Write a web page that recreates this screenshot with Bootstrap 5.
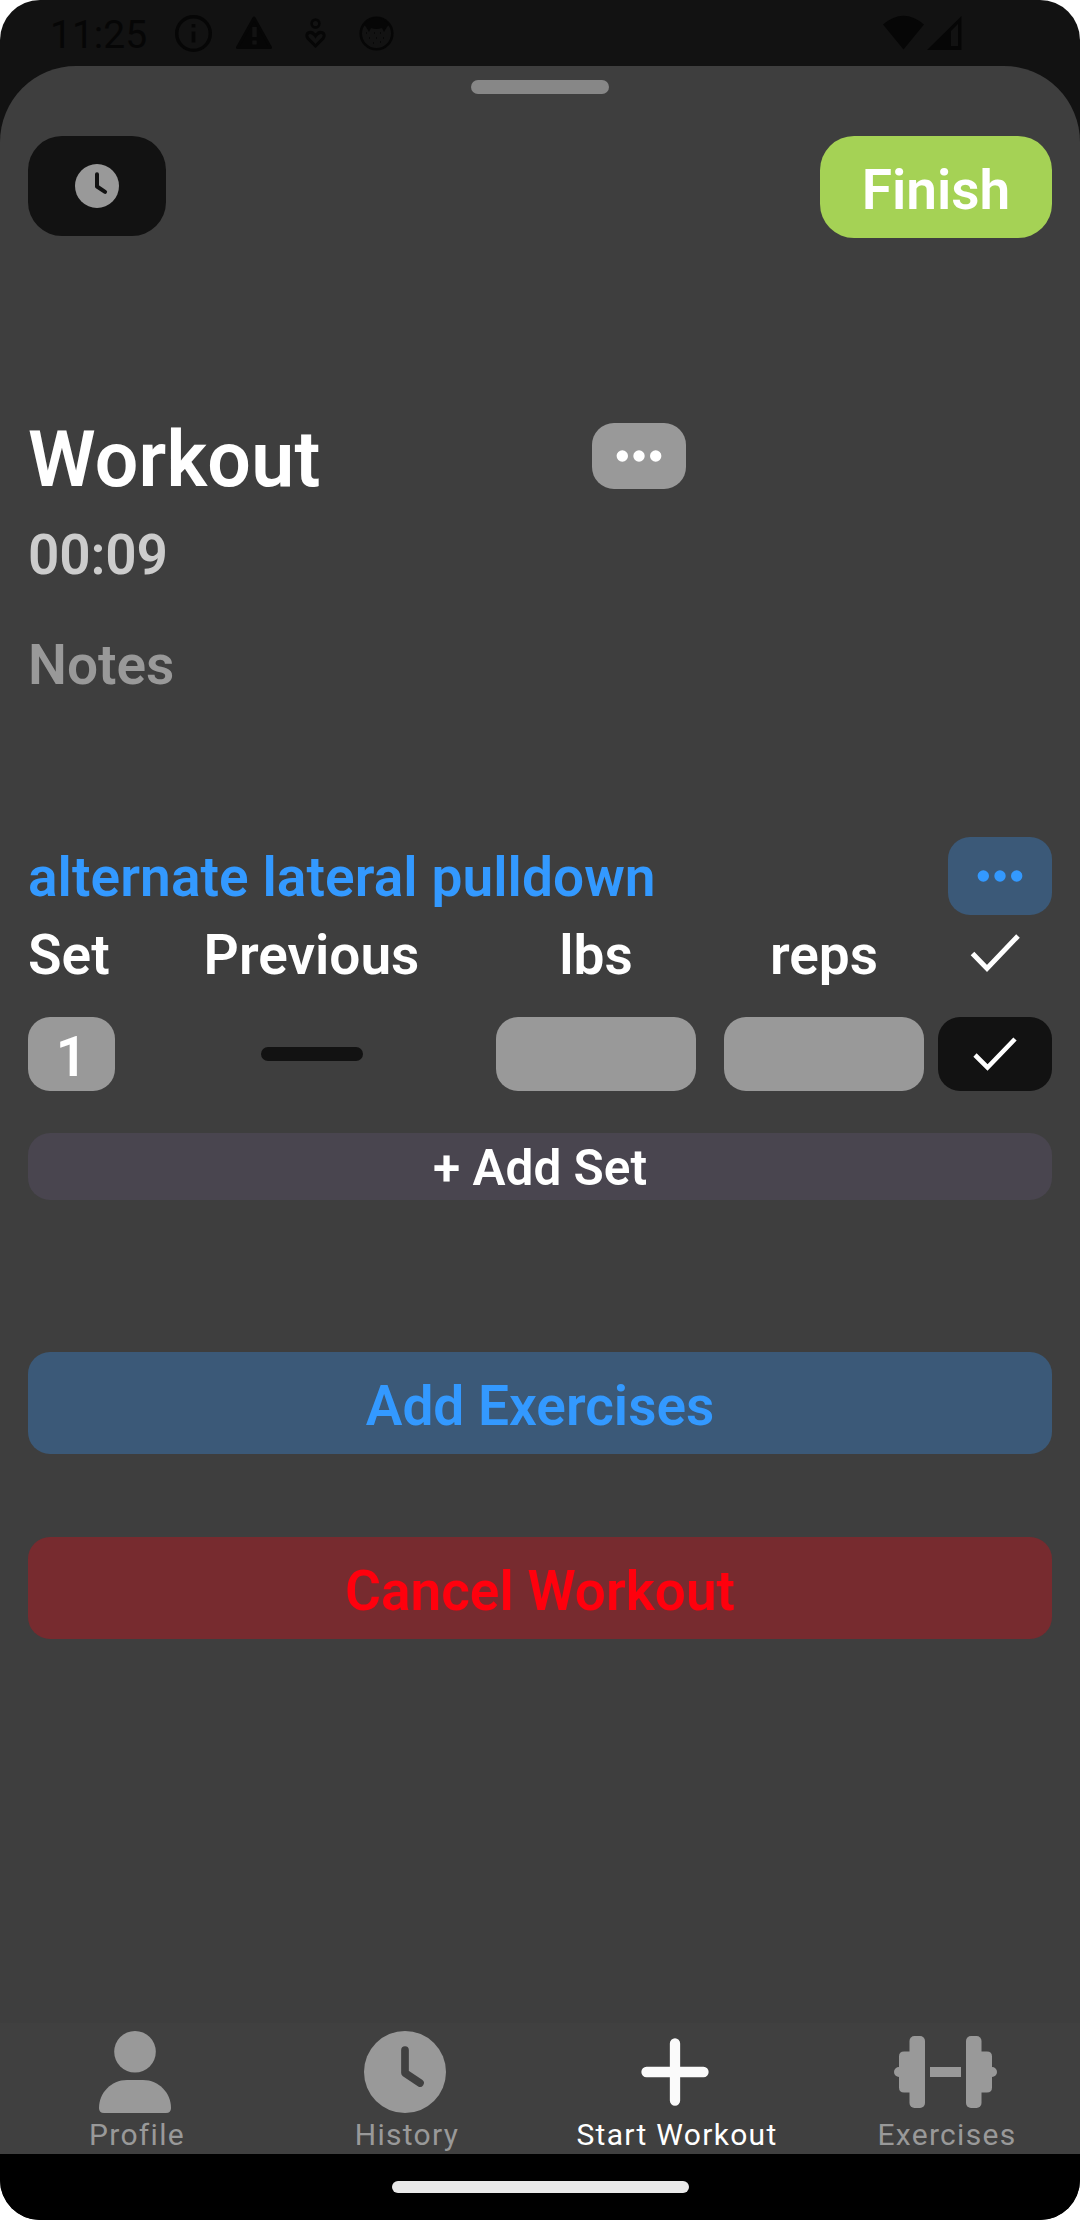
<!DOCTYPE html>
<html lang="en">
<head>
<meta charset="utf-8">
<meta name="viewport" content="width=device-width, initial-scale=1">
<title>Workout</title>
<link href="https://cdn.jsdelivr.net/npm/bootstrap@5.3.0/dist/css/bootstrap.min.css" rel="stylesheet">
<style>
  body { background: #fff; font-family: Roboto, "Liberation Sans", sans-serif; }
  svg { display: block; flex: none; }
  .screen { width: 1080px; height: 2220px; border-radius: 40px; background: #121212; color: #fff; }
  .status { height: 66px; padding: 0 117px 0 50px; color: #060606; font-size: 39px; line-height: 66px; flex: none; }
  .status span { padding-top: 4px; width: 120px; }
  .sheet { background: #3e3e3e; border-radius: 76px 76px 0 0; padding: 14px 28px 0; min-height: 0; }
  .handle { width: 138px; height: 14px; border-radius: 7px; background: #878787; }
  .btn { --bs-btn-padding-x: 0; --bs-btn-padding-y: 0; border: 0; border-radius: 22px; line-height: 1; flex: none; color: #fff; }
  .t55 { font-size: 55px; font-weight: 600; line-height: 64px; }
  .topbar { margin-top: 42px; height: 102px; }
  .btn-timer { width: 138px; height: 100px; border-radius: 34px; background: #121212; }
  .btn-finish { width: 232px; height: 102px; border-radius: 34px; background: #a5d255; padding-top: 6px; }
  .heading { margin-top: 174px; height: 92px; }
  .heading h1 { font-size: 77px; font-weight: 600; line-height: 90px; letter-spacing: .25px; width: 564px; padding-top: 3px; }
  .btn-grey { width: 94px; height: 66px; background: #999; margin-top: 11px; }
  .btn-blue { background: #3b5978; color: #39f; }
  .elapsed { color: #ccc; margin-top: 19px; letter-spacing: -.2px; }
  .notes { color: #999; margin-top: 46px; }
  .exercise { margin-top: 140px; height: 78px; color: #39f; }
  .exercise span { padding-top: 2px; letter-spacing: .08px; }
  .btn-more { width: 104px; height: 78px; }
  .set-grid { display: grid; grid-template-columns: 87px 381px 200px 28px 200px 14px 114px; }
  .set-head { margin-top: 8px; height: 64px; }
  .prev-label { padding-left: 12px; }
  .set-line { margin-top: 30px; height: 74px; }
  .pill { border-radius: 22px; background: #999; height: 74px; }
  .pill-num { padding-top: 8px; }
  .dash { width: 102px; height: 14px; border-radius: 7px; background: #121212; margin-left: 146px; }
  .btn-check-set { background: #121212; height: 74px; }
  .btn-addset { margin-top: 42px; height: 67px; background: #49454f; font-size: 49.5px; font-weight: 600; padding-top: 4px; }
  .btn-add { margin-top: 152px; height: 102px; padding-top: 5px; }
  .btn-cancel { margin-top: 83px; height: 102px; background: #772b2f; color: #ff000d; padding-top: 5px; }
  .tabs { height: 131px; background: #404040; flex: none; padding-top: 8px; }
  .tabs .nav-link { padding: 0; color: #999; font-size: 30px; letter-spacing: 1.3px; line-height: 36px; }
  .tabs .nav-link.active { color: #fff; }
  .tabs .nav-link svg { margin: 0 auto 4px; }
  .tabs .nav-link span { display: block; padding-left: 4px; }
  .gesture { height: 66px; background: #000; flex: none; }
  .gesture div { width: 297px; height: 12px; border-radius: 6px; background: #e9e9e9; }
</style>
</head>
<body>
<div class="screen d-flex flex-column overflow-hidden">
  <div class="status d-flex align-items-center">
    <span>11:25</span>
    <svg width="230" height="66" viewBox="170 0 230 66" fill="none" stroke="#060606">
      <circle cx="193.500" cy="33.500" r="16.800" stroke-width="3.500"/>
      <path d="M193.500 24V27.500M193.500 31.500V42.500" stroke-width="3.600"/>
      <path d="M254 18L270.500 47.500H237.500Z" fill="#060606" stroke-width="3" stroke-linejoin="round"/>
      <path d="M254.500 27V37M254.500 40.500V44.500" stroke="#121212" stroke-width="4.500"/>
      <circle cx="315.500" cy="23.500" r="3.900" stroke-width="2.600"/>
      <path d="M315.500 46L308 38.500C304 33 311 29.500 315.500 36C320 29.500 327 33 323 38.500Z" stroke-width="3"/>
      <circle cx="376.500" cy="33.500" r="15.800" stroke-width="2.600"/>
      <path d="M364 25Q376 10 389 25L387 27L384 32L382 28Q376 30 371 28L369 32L366 27Z" fill="#060606" stroke="none"/>
      <path d="M366 33h1M374 33h1M380 33h1M369 38h1M376 38h1M383 38h1M373 43h1M380 42h1" stroke-width="1.300"/>
    </svg>
    <svg class="ms-auto" width="80" height="66" viewBox="883 0 80 66" fill="#060606">
      <path d="M883 24.500Q903.500 7 924 24.500L903.500 49.500Z"/>
      <path fill-rule="evenodd" d="M927 50L961.500 16V50ZM951 46H958V24L951 31Z"/>
    </svg>
  </div>
  <main class="sheet flex-fill d-flex flex-column">
    <div class="handle mx-auto flex-shrink-0"></div>
    <div class="topbar d-flex justify-content-between align-items-start flex-shrink-0">
      <button class="btn btn-timer d-flex align-items-center justify-content-center" aria-label="Timer">
        <svg width="44" height="44" viewBox="0 0 82 82"><circle cx="41" cy="41" r="41" fill="#999"/><path d="M41 19V42L56 52" fill="none" stroke="#121212" stroke-width="7.500" stroke-linecap="round" stroke-linejoin="round"/></svg>
      </button>
      <button class="btn btn-finish t55">Finish</button>
    </div>
    <div class="heading d-flex align-items-start flex-shrink-0">
      <h1 class="m-0">Workout</h1>
      <button class="btn btn-grey d-flex align-items-center justify-content-center" aria-label="More">
        <svg width="46" height="12" viewBox="0 0 46 12" fill="#fff"><circle cx="6.300" cy="6" r="5.700"/><circle cx="23" cy="6" r="5.700"/><circle cx="39.700" cy="6" r="5.700"/></svg>
      </button>
    </div>
    <div class="elapsed t55">00:09</div>
    <div class="notes t55">Notes</div>
    <div class="exercise d-flex justify-content-between align-items-center flex-shrink-0">
      <span class="t55">alternate lateral pulldown</span>
      <button class="btn btn-blue btn-more d-flex align-items-center justify-content-center" aria-label="Exercise options">
        <svg width="46" height="12" viewBox="0 0 46 12" fill="#39f"><circle cx="6.300" cy="6" r="5.700"/><circle cx="23" cy="6" r="5.700"/><circle cx="39.700" cy="6" r="5.700"/></svg>
      </button>
    </div>
    <div class="set-grid set-head t55 flex-shrink-0">
      <span>Set</span>
      <span class="prev-label text-center">Previous</span>
      <span class="text-center">lbs</span><i></i>
      <span class="text-center">reps</span><i></i>
      <svg class="mx-auto" width="50" height="54" viewBox="0 0 50 54"><path d="M2.500 30.500L17 45.500L48 13" fill="none" stroke="#fff" stroke-width="5"/></svg>
    </div>
    <div class="set-grid set-line align-items-center flex-shrink-0">
      <div class="pill pill-num t55 text-center">1</div>
      <div class="dash"></div>
      <div class="pill"></div><i></i>
      <div class="pill"></div><i></i>
      <button class="btn btn-check-set d-flex align-items-center justify-content-center" aria-label="Mark set done">
        <svg width="44" height="34" viewBox="0 0 44 34"><path d="M2 18L14.500 30.500L42 2" fill="none" stroke="#fff" stroke-width="4.600"/></svg>
      </button>
    </div>
    <button class="btn btn-addset">+ Add Set</button>
    <button class="btn btn-blue btn-add t55">Add Exercises</button>
    <button class="btn btn-cancel t55">Cancel Workout</button>
  </main>
  <nav class="tabs nav nav-justified flex-nowrap">
    <div class="nav-item"><a class="nav-link" href="#">
      <svg width="72" height="82" viewBox="0 0 72 82" fill="#999"><circle cx="36" cy="20.800" r="20.800"/><path d="M28 49H44C60 49 72 62 72 77Q72 82 67 82H5Q0 82 0 77C0 62 12 49 28 49Z"/></svg>
      <span>Profile</span></a></div>
    <div class="nav-item"><a class="nav-link" href="#">
      <svg width="82" height="82" viewBox="0 0 82 82"><circle cx="41" cy="41" r="41" fill="#999"/><path d="M41 19V42L56 52" fill="none" stroke="#404040" stroke-width="7.700" stroke-linecap="round" stroke-linejoin="round"/></svg>
      <span>History</span></a></div>
    <div class="nav-item"><a class="nav-link active" href="#">
      <svg width="82" height="82" viewBox="0 0 82 82"><path d="M41 12.500V69.500M12.500 41H69.500" stroke="#fafafa" stroke-width="10.300" stroke-linecap="round"/></svg>
      <span>Start Workout</span></a></div>
    <div class="nav-item"><a class="nav-link" href="#">
      <svg width="103" height="82" viewBox="0 0 103 82" fill="#999"><rect x="15.500" y="5" width="15.500" height="72" rx="5"/><rect x="72" y="5" width="15.500" height="72" rx="5"/><path d="M20 20.500V61.500H10Q5 61.500 5 56.500V46A5 5 0 0 1 5 36V25.500Q5 20.500 10 20.500ZM83 20.500V61.500H93Q98 61.500 98 56.500V46A5 5 0 0 0 98 36V25.500Q98 20.500 93 20.500ZM36 36H67V46H36Z"/></svg>
      <span>Exercises</span></a></div>
  </nav>
  <div class="gesture d-flex align-items-center justify-content-center"><div></div></div>
</div>
<script src="https://cdn.jsdelivr.net/npm/bootstrap@5.3.0/dist/js/bootstrap.bundle.min.js"></script>
</body>
</html>
